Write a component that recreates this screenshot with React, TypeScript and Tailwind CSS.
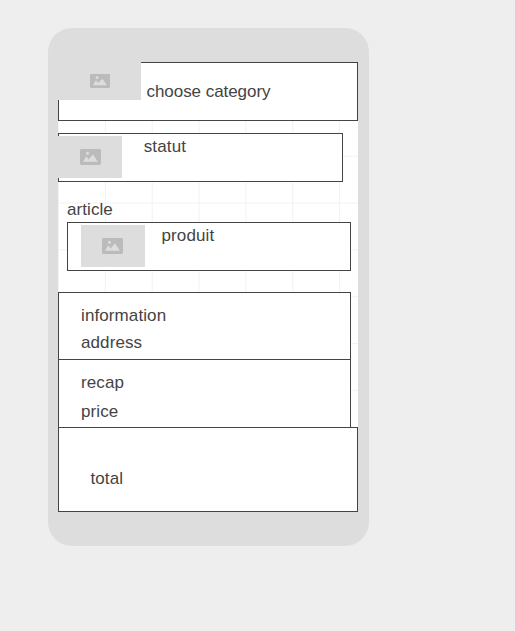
function Picture({ className, icon }: { className: string; icon: string }) {
  return (
    <div className={`flex shrink-0 items-center bg-[#dddddd] ${className}`}>
      <svg className={icon} viewBox="0 0 21 16" preserveAspectRatio="none">
        <rect width="21" height="16" rx="1.4" fill="#bbbbbb" />
        <circle cx="7.5" cy="4.2" r="1.5" fill="#dddddd" />
        <path d="M3 12.8 L6.2 7.2 L8.6 10.4 L13 5.3 L17.8 12.8 Z" fill="#dddddd" />
      </svg>
    </div>
  );
}

export default function App() {
  return (
    <div className="h-[631px] w-[515px] bg-[#eeeeee] pt-[28px] pl-[48px] font-['Liberation_Sans',Arial,sans-serif] text-[17px] leading-5 text-[#444444]">
      <main className="h-[518px] w-[321px] rounded-[24px] bg-[#dddddd] px-[10px] pt-[34px]">
        <div className="flex h-[450px] w-[300px] flex-col items-start bg-white bg-[linear-gradient(to_right,#f2f2f2_1.4px,transparent_1.4px),linear-gradient(to_bottom,#f2f2f2_1.4px,transparent_1.4px)] bg-[size:46.85px_46.85px]">
          <header className="flex h-[59px] w-full border border-[#444444] bg-white">
            <Picture className="-mt-px -ml-px h-[38px] w-[83px] pl-8" icon="h-[14px] w-[20px]" />
            <h1 className="mt-[19px] ml-[5.5px] tracking-[-0.05px]">choose category</h1>
          </header>

          <section className="mt-3 flex h-[49px] w-[285px] border border-[#444444] bg-white">
            <Picture className="mt-0.5 -ml-px h-[42px] w-16 pl-[22px]" icon="h-4 w-[21px]" />
            <p className="mt-[3px] ml-[21.7px] tracking-[0.15px]">statut</p>
          </section>

          <h2 className="mt-[18px] ml-[9px] tracking-[0.08px]">article</h2>
          <section className="mt-[2px] ml-[9px] flex h-[49px] w-[284px] border border-[#444444] bg-white">
            <Picture className="mt-0.5 ml-[13px] h-[42px] w-16 pl-[21px]" icon="h-4 w-[21px]" />
            <p className="mt-[3px] ml-[16.5px] tracking-[0.12px]">produit</p>
          </section>

          <section className="mt-[21px] flex h-[68px] w-[293px] flex-col gap-[7px] border border-[#444444] bg-white pt-[13px] pl-[22px] tracking-[0.1px]">
            <p>information</p>
            <p>address</p>
          </section>
          <section className="-mt-px flex h-[69px] w-[293px] flex-col gap-[9px] border border-[#444444] bg-white pt-[13px] pl-[22px] tracking-[0.1px]">
            <p>recap</p>
            <p>price</p>
          </section>
          <footer className="-mt-px h-[85px] w-full border border-[#444444] bg-white pt-[41px] pl-[31.4px] tracking-[0.12px]">
            <p>total</p>
          </footer>
        </div>
      </main>
    </div>
  );
}
